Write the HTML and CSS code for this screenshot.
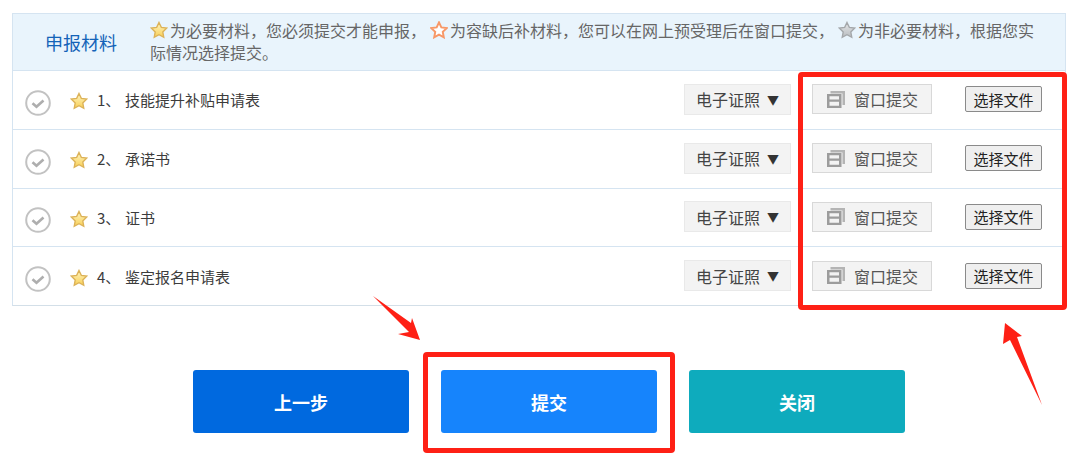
FILE: index.html
```html
<!DOCTYPE html>
<html lang="zh-CN">
<head>
<meta charset="utf-8">
<title>申报材料</title>
<link rel="stylesheet" href="styles.css">
</head>
<body>
<svg class="defs" width="0" height="0" aria-hidden="true">
  <defs>
    <linearGradient id="gold" x1="0" y1="0" x2="0" y2="1">
      <stop offset="0" stop-color="#fff6c4"/>
      <stop offset="1" stop-color="#f8cf55"/>
    </linearGradient>
    <linearGradient id="silver" x1="0" y1="0" x2="0" y2="1">
      <stop offset="0" stop-color="#e4e6e8"/>
      <stop offset="1" stop-color="#b9bcbf"/>
    </linearGradient>
    <symbol id="star" viewBox="0 0 20 20">
      <path d="M10 1.6l2.6 5.5 6 .8-4.400 4.200 1.100 6L10 15.200l-5.300 2.900 1.100-6L1.400 7.900l6-.8z"/>
    </symbol>
    <symbol id="check" viewBox="0 0 26 26">
      <circle cx="13" cy="13" r="11.800" fill="#fff" stroke="#c2c2c2" stroke-width="2"/>
      <path d="M7.500 13.200l4 3.600 7-6.300" fill="none" stroke="#aeaeae" stroke-width="2.600"/>
    </symbol>
    <symbol id="win" viewBox="0 0 18 17">
      <path d="M3.500 0H18v14h-2.500V2.500h-12z" fill="#b4b4b4"/>
      <path d="M0 3h14.500v14H0zM2.500 5.200v3.300h9.500V5.200zM2.500 10.700v4h9.500v-4z" fill="#9c9c9c" fill-rule="evenodd"/>
    </symbol>
  </defs>
</svg>

<main class="page">
  <section class="table">
    <header class="head">
      <h2 class="head-title">申报材料</h2>
      <p class="head-note"><svg class="star star-gold star-note"><use href="#star"/></svg>为必要材料，您必须提交才能申报，<svg class="star star-orange star-note star-gap"><use href="#star"/></svg>为容缺后补材料，您可以在网上预受理后在窗口提交，<svg class="star star-grey star-note star-gap"><use href="#star"/></svg>为非必要材料，根据您实<br>际情况选择提交。</p>
    </header>

    <div class="row">
      <svg class="check"><use href="#check"/></svg>
      <svg class="star star-gold star-row"><use href="#star"/></svg>
      <span class="num">1、</span>
      <span class="name">技能提升补贴申请表</span>
      <span class="select">电子证照<i class="caret">▼</i></span>
      <span class="window"><svg class="win"><use href="#win"/></svg>窗口提交</span>
      <span class="file">选择文件</span>
    </div>
    <div class="row">
      <svg class="check"><use href="#check"/></svg>
      <svg class="star star-gold star-row"><use href="#star"/></svg>
      <span class="num">2、</span>
      <span class="name">承诺书</span>
      <span class="select">电子证照<i class="caret">▼</i></span>
      <span class="window"><svg class="win"><use href="#win"/></svg>窗口提交</span>
      <span class="file">选择文件</span>
    </div>
    <div class="row">
      <svg class="check"><use href="#check"/></svg>
      <svg class="star star-gold star-row"><use href="#star"/></svg>
      <span class="num">3、</span>
      <span class="name">证书</span>
      <span class="select">电子证照<i class="caret">▼</i></span>
      <span class="window"><svg class="win"><use href="#win"/></svg>窗口提交</span>
      <span class="file">选择文件</span>
    </div>
    <div class="row">
      <svg class="check"><use href="#check"/></svg>
      <svg class="star star-gold star-row"><use href="#star"/></svg>
      <span class="num">4、</span>
      <span class="name">鉴定报名申请表</span>
      <span class="select">电子证照<i class="caret">▼</i></span>
      <span class="window"><svg class="win"><use href="#win"/></svg>窗口提交</span>
      <span class="file">选择文件</span>
    </div>
  </section>

  <nav class="actions">
    <button class="btn btn-prev">上一步</button>
    <button class="btn btn-submit">提交</button>
    <button class="btn btn-close">关闭</button>
  </nav>

  <div class="mark mark-files"></div>
  <div class="mark mark-submit"></div>
  <svg class="arrows" viewBox="0 0 1080 475" aria-hidden="true">
    <path d="M373 296L411 323 412 318 420 340 398 334 409 332z"/>
    <path d="M1005 323L1022 336 1017 337 1042 405 1010 340 1003 344z"/>
  </svg>
</main>
</body>
</html>
```
FILE: styles.css
```css
* { box-sizing: border-box; }
html, body { margin: 0; padding: 0; background: #fff; }
body {
  font-family: "Noto Sans CJK SC", "Noto Sans", sans-serif;
  overflow: hidden;
}
.defs { position: absolute; }
.page {
  position: relative;
  width: 1080px;
  height: 475px;
  padding: 13px 14px 0 12px;
}
.table {
  border: 1px solid #d5e4f1;
  border-bottom-color: #d3dfe8;
}
.head {
  height: 57px;
  display: flex;
  align-items: center;
  background: #e9f4fc;
  border-bottom: 1px solid #d5e4f1;
}
.head-title {
  margin: 0 0 0 32px;
  width: 105px;
  flex: none;
  font-size: 18px;
  line-height: 24px;
  font-weight: 400;
  color: #1463b8;
}
.head-note {
  margin: -2px 0 0;
  width: 895px;
  font-size: 16px;
  line-height: 22px;
  color: #666;
}
.star { fill: url(#gold); stroke: #dcb258; stroke-width: 1.500; }
.star-orange { fill: #fff; stroke: #f79868; stroke-width: 2.200; }
.star-grey { fill: url(#silver); stroke: #a4a7aa; stroke-width: 1.500; }
.star-note { width: 18px; height: 18px; vertical-align: -2px; margin-right: 2px; }
.star-gap { margin-left: 4px; }
.star-row { width: 18px; height: 18px; flex: none; margin: 3px 0 0 19px; }

.row {
  height: 58.75px;
  display: flex;
  align-items: center;
  padding-right: 23px;
  border-bottom: 1px solid #d5e4f1;
  font-size: 15px;
  color: #3c3c3c;
}
.row:last-child { height: 58px; border-bottom: 0; }
.check { width: 26px; height: 26px; flex: none; margin: 6px 0 0 12px; }
.num { width: 28px; margin: 1px 0 0 9px; flex: none; line-height: 20px; }
.name { flex: 1; line-height: 20px; margin-top: 1px; }
.select {
  width: 107px;
  height: 31px;
  flex: none;
  display: flex;
  align-items: center;
  gap: 7px;
  padding-left: 11px;
  margin-top: -1px;
  background: #f3f3f3;
  border: 1px solid #e9e9e9;
  font-size: 16px;
  color: #444;
}
.caret { font-style: normal; font-size: 12px; color: #333; }
.window {
  width: 120px;
  height: 30px;
  flex: none;
  display: flex;
  align-items: center;
  margin: -1px 0 0 21px;
  padding-left: 14px;
  background: #f3f3f3;
  border: 1px solid #d8d8d8;
  font-size: 16px;
  color: #555;
}
.win { width: 18px; height: 17px; margin-right: 9px; flex: none; }
.file {
  width: 77px;
  height: 26px;
  flex: none;
  display: flex;
  align-items: center;
  justify-content: center;
  margin: -1px 0 0 33px;
  background: #efefef;
  border: 1px solid #8a8a8a;
  border-radius: 2px;
  font-size: 15px;
  color: #222;
}

.actions {
  display: flex;
  gap: 32px;
  margin: 64px 0 0 181px;
}
.btn {
  width: 216px;
  height: 63px;
  border: 0;
  border-radius: 3px;
  font: 700 18px "Noto Sans CJK SC", "Noto Sans", sans-serif;
  color: #fff;
}
.btn-prev { background: #0069df; }
.btn-submit { background: #1684fc; }
.btn-close { background: #0eabbd; }

.mark {
  position: absolute;
  border: 5px solid #fe2015;
  border-radius: 4px;
}
.mark-files { left: 798px; top: 72px; width: 269px; height: 238px; }
.mark-submit { left: 423px; top: 352px; width: 252px; height: 101px; }
.arrows {
  position: absolute;
  left: 0;
  top: 0;
  width: 1080px;
  height: 475px;
  fill: #fe2015;
  pointer-events: none;
}
```
